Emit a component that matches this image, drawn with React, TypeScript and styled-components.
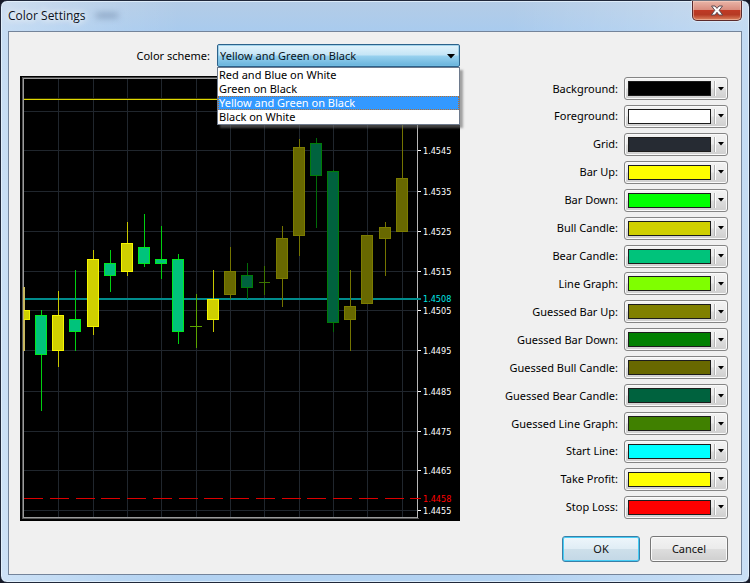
import React from "react";
import styled, { createGlobalStyle } from "styled-components";

const uiFont = '"Noto Sans", "Open Sans", sans-serif';
const axisFont = '"DejaVu Sans Condensed", "DejaVu Sans", sans-serif';

const GlobalStyle = createGlobalStyle`
  * { box-sizing: border-box; }
  body {
    margin: 0;
    background: #161a28;
    color: #000;
    font-family: ${uiFont};
    font-size: 11px;
    line-height: 14px;
  }
`;

const Window = styled.div`
  display: flex;
  flex-direction: column;
  min-height: 100vh;
  padding: 0 7px 7px;
  border: 1px solid #20283a;
  border-radius: 7px;
  background:
    linear-gradient(90deg, rgba(255, 255, 255, 0.35) 0%, rgba(255, 255, 255, 0.1) 14%, rgba(255, 255, 255, 0) 24%, rgba(255, 255, 255, 0) 68%, rgba(255, 255, 255, 0.3) 100%),
    linear-gradient(180deg, #b4cce6 0%, #a9cbee 30px, #b3d2f1 100%);
  box-shadow: inset 0 0 0 1px rgba(235, 246, 255, 0.7);
`;

const TitleBar = styled.header`
  display: flex;
  justify-content: space-between;
  align-items: flex-start;
  height: 30px;
`;

const Title = styled.h1`
  margin: 0;
  padding-top: 6px;
  font: 400 12px/18px "Open Sans", "Noto Sans", sans-serif;
  color: #0c121c;
  text-shadow: 0 0 8px #fff, 0 0 6px #fff;

  &::after {
    content: "";
    display: inline-block;
    width: 22px;
    height: 5px;
    margin-left: 10px;
    vertical-align: 2px;
    background: rgba(70, 96, 130, 0.4);
    filter: blur(3px);
  }
`;

const CloseButton = styled.button`
  display: flex;
  align-items: center;
  justify-content: center;
  width: 50px;
  height: 20px;
  padding: 0;
  border: 1px solid #5b2a2c;
  border-top: 0;
  border-radius: 0 0 5px 5px;
  background: linear-gradient(#e9b5a8 0%, #d98d7e 46%, #bf3a25 50%, #b53a24 72%, #dc8460 100%);
  box-shadow: inset 0 0 0 1px rgba(255, 220, 205, 0.45), 0 0 1px 1px rgba(255, 255, 255, 0.4);
`;

const Client = styled.main`
  flex: 1;
  display: grid;
  grid-template-columns: minmax(0, 1fr) 224px;
  grid-template-rows: auto auto 1fr;
  column-gap: 44px;
  padding: 12px 13px 12px 11px;
  border: 1px solid #74849a;
  background: #f0f0f0;
`;

const SchemeRow = styled.div`
  grid-column: 1;
  display: flex;
  align-items: center;
  justify-content: flex-end;
  gap: 7px;
  margin-bottom: 9px;
`;

const SelectBox = styled.div`
  position: relative;
  width: 243px;
`;

const SchemeSelect = styled.select`
  appearance: none;
  display: block;
  width: 100%;
  height: 23px;
  padding: 0 20px 0 2px;
  border: 1px solid #2c628b;
  border-radius: 2px;
  background: linear-gradient(#e3f3fb 0%, #c4e5f6 48%, #98d1ef 52%, #68b3db 100%);
  box-shadow: inset 0 0 0 1px rgba(120, 190, 225, 0.6);
  color: #0a1420;
  font: inherit;
`;

const SelectArrow = styled.svg`
  position: absolute;
  top: 10px;
  right: 5px;
  pointer-events: none;
`;

const OptionList = styled.ul`
  position: absolute;
  z-index: 1;
  top: 100%;
  left: 0;
  width: 100%;
  margin: 0;
  padding: 0;
  list-style: none;
  border: 1px solid #6e7a8c;
  background: #fff;
  box-shadow: 3px 3px 2px rgba(110, 110, 110, 0.6);
`;

const Option = styled.li<{ $selected: boolean }>`
  padding-left: 1px;
  color: ${(p) => (p.$selected ? "#fff" : "#000")};
  background: ${(p) => (p.$selected ? "#3399ff" : "transparent")};
  outline: ${(p) => (p.$selected ? "1px dotted #b8702c" : "none")};
  outline-offset: -1px;
`;

const ChartSvg = styled.svg`
  grid-column: 1;
  display: block;
  width: 100%;
  height: auto;
`;

const AxisText = styled.text`
  font-family: ${axisFont};
  font-size: 9px;
`;

const ColorList = styled.div`
  grid-column: 2;
  display: flex;
  flex-direction: column;
  justify-content: space-between;
  padding: 1px 0 2px;
`;

const ColorRow = styled.div`
  display: flex;
  align-items: center;
  justify-content: flex-end;
  gap: 6px;
`;

const ColorButton = styled.button`
  display: flex;
  align-items: center;
  width: 104px;
  height: 23px;
  padding: 0 3px;
  border: 1px solid #858585;
  border-radius: 3px;
  background: linear-gradient(#f3f3f3 0%, #ebebeb 48%, #dddddd 52%, #cfcfcf 100%);
  box-shadow: inset 0 0 0 1px #fafafa;
`;

const Swatch = styled.span<{ $color: string }>`
  flex: 1;
  height: 15px;
  border: 1px solid #1c1c1c;
  background: ${(p) => p.$color};
`;

const Divider = styled.span`
  width: 2px;
  height: 15px;
  margin: 0 2px 0 3px;
  border-left: 1px solid #b4b4b4;
  border-right: 1px solid #fff;
`;

const Actions = styled.footer`
  grid-column: 1 / -1;
  display: flex;
  justify-content: flex-end;
  align-items: flex-end;
  gap: 10px;
`;

const ActionButton = styled.button<{ $primary?: boolean }>`
  width: 78px;
  height: 26px;
  padding: 0;
  border: 1px solid ${(p) => (p.$primary ? "#3a7fa8" : "#777")};
  border-radius: 3px;
  background: ${(p) =>
    p.$primary
      ? "linear-gradient(#eef6fb 0%, #e0edf5 48%, #cddfea 52%, #c3d8e6 100%)"
      : "linear-gradient(#f3f3f3 0%, #ebebeb 48%, #dddddd 52%, #cfcfcf 100%)"};
  box-shadow: inset 0 0 0 1px ${(p) => (p.$primary ? "#46cdf5" : "#fafafa")};
  color: #101010;
  font: inherit;
`;

const schemes = ["Red and Blue on White", "Green on Black", "Yellow and Green on Black", "Black on White"];
const current = "Yellow and Green on Black";

const colors: [string, string][] = [
  ["Background", "#000000"],
  ["Foreground", "#ffffff"],
  ["Grid", "#262b33"],
  ["Bar Up", "#ffff00"],
  ["Bar Down", "#00ff00"],
  ["Bull Candle", "#cfcf00"],
  ["Bear Candle", "#00c37b"],
  ["Line Graph", "#7fff00"],
  ["Guessed Bar Up", "#808000"],
  ["Guessed Bar Down", "#008000"],
  ["Guessed Bull Candle", "#686800"],
  ["Guessed Bear Candle", "#00623e"],
  ["Guessed Line Graph", "#408000"],
  ["Start Line", "#00ffff"],
  ["Take Profit", "#ffff00"],
  ["Stop Loss", "#ff0000"],
];

type Kind = "bull" | "bear" | "guessBull" | "guessBear";

const candleColors: Record<Kind, { body: string; edge: string; wick: string }> = {
  bull: { body: "#cfcf00", edge: "#f6f600", wick: "#c8c800" },
  bear: { body: "#00c37b", edge: "#00e820", wick: "#00d010" },
  guessBull: { body: "#686800", edge: "#7c7c00", wick: "#747400" },
  guessBear: { body: "#00623e", edge: "#007c08", wick: "#006c08" },
};

// kind, centre x, body top, body bottom, wick top, wick bottom
const candles: [Kind, number, number, number, number, number][] = [
  ["bear", 21, 239, 279, 234, 335],
  ["bull", 38, 239, 275, 215, 291],
  ["bear", 55, 243, 256, 194, 275],
  ["bull", 73, 183, 251, 174, 259],
  ["bear", 90, 187, 200, 174, 216],
  ["bull", 107, 167, 196, 146, 200],
  ["bear", 124, 171, 188, 138, 191],
  ["bear", 141, 183, 188, 150, 203],
  ["bear", 158, 183, 256, 178, 268],
  ["bull", 193, 223, 244, 194, 256],
  ["guessBull", 210, 195, 219, 171, 223],
  ["guessBear", 227, 199, 212, 187, 223],
  ["guessBull", 262, 162, 203, 150, 231],
  ["guessBull", 279, 71, 160, 63, 180],
  ["guessBear", 296, 67, 100, 62, 152],
  ["guessBear", 313, 95, 247, 94, 256],
  ["guessBull", 330, 230, 244, 194, 275],
  ["guessBull", 347, 159, 228, 159, 228],
  ["guessBull", 365, 151, 163, 146, 200],
  ["guessBull", 382, 102, 156, 32, 156],
];

const gridX = [38, 73, 107, 141, 176, 210, 244, 279, 313, 347, 382];
const levels: [string, number][] = [
  ["1.4545", 74],
  ["1.4535", 115],
  ["1.4525", 155],
  ["1.4515", 195],
  ["1.4505", 234],
  ["1.4495", 274],
  ["1.4485", 315],
  ["1.4475", 355],
  ["1.4465", 394],
  ["1.4455", 434],
];

function Chart() {
  return (
    <ChartSvg viewBox="0 0 440 445" role="img" aria-label="Chart preview" shapeRendering="crispEdges">
      <rect width="440" height="445" fill="#000" />
      <g fill="#20262d">
        {gridX.map((x) => (
          <rect key={x} x={x} y="3" width="1" height="439" />
        ))}
        <rect x="3" y="35" width="394" height="1" />
        {levels.map(([label, y]) => (
          <rect key={label} x="3" y={y} width="394" height="1" />
        ))}
      </g>
      <rect x="3" y="2" width="395" height="1" fill="#9c9c9c" />
      <rect x="3" y="2" width="1" height="440" fill="#9c9c9c" />
      <rect x="3" y="441" width="395" height="1" fill="#9c9c9c" />
      <rect x="397" y="2" width="1" height="440" fill="#b8b8b8" />
      <rect x="2" y="1" width="397" height="1" fill="#444" />
      <rect x="2" y="1" width="1" height="442" fill="#555" />
      <rect x="2" y="442" width="397" height="1" fill="#555" />
      <rect x="4" y="22" width="393" height="1" fill="#333000" />
      <rect x="4" y="23" width="393" height="1" fill="#e0d800" />
      <rect x="4" y="222" width="397" height="2" fill="#008c8c" />

      <rect x="3" y="211" width="2" height="64" fill="#c8b860" />
      <rect x="4" y="234" width="6" height="10" fill="#f0f000" />
      <rect x="4" y="235" width="5" height="8" fill="#cfcf00" />
      {candles.map(([kind, x, top, bottom, high, low]) => {
        const c = candleColors[kind];
        return (
          <g key={x}>
            <rect x={x} y={high} width="1" height={low - high} fill={c.wick} />
            <rect x={x - 6} y={top} width="12" height={bottom - top} fill={c.edge} />
            <rect x={x - 5} y={top + 1} width="10" height={bottom - top - 2} fill={c.body} />
          </g>
        );
      })}
      <g fill="#5ba400">
        <rect x="176" y="218" width="1" height="54" />
        <rect x="170" y="250" width="12" height="1" />
      </g>
      <g fill="#3c7400">
        <rect x="244" y="190" width="1" height="29" />
        <rect x="239" y="206" width="11" height="1" />
      </g>

      <g fill="#dc0000">
        {Array.from({ length: 16 }, (_, i) => {
          const x = 4 + Math.round((i * 103) / 4);
          return <rect key={i} x={x} y="422" width={Math.min(19, 401 - x)} height="1" />;
        })}
      </g>
      {levels.map(([label, y]) => (
        <g key={label} fill="#fff">
          <rect x="398" y={y} width="3" height="1" />
          <AxisText x="403" y={y + 4}>{label}</AxisText>
        </g>
      ))}
      <AxisText x="403" y="226" fill="#00e6e6">1.4508</AxisText>
      <AxisText x="403" y="426" fill="#ff0000">1.4458</AxisText>
    </ChartSvg>
  );
}

export default function App() {
  return (
    <>
      <GlobalStyle />
      <Window>
        <TitleBar>
          <Title>Color Settings</Title>
          <CloseButton aria-label="Close">
            <svg width="14" height="11" viewBox="0 0 14 11">
              <path
                d="M1.5 1H5L7 3.4 9 1h3.500L9.200 5.300 12.700 10H9L7 7.300 5 10H1.300L4.800 5.300Z"
                fill="#fff"
                stroke="#5c4a50"
                strokeWidth="1"
                strokeLinejoin="round"
              />
            </svg>
          </CloseButton>
        </TitleBar>
        <Client>
          <SchemeRow>
            <label htmlFor="scheme">Color scheme:</label>
            <SelectBox>
              <SchemeSelect id="scheme" defaultValue={current}>
                {schemes.map((s) => (
                  <option key={s}>{s}</option>
                ))}
              </SchemeSelect>
              <SelectArrow width="8" height="5" viewBox="0 0 8 5">
                <path d="M0 0h8L4 4.500Z" fill="#000" />
              </SelectArrow>
              <OptionList role="listbox" aria-label="Color scheme">
                {schemes.map((s) => (
                  <Option key={s} role="option" aria-selected={s === current} $selected={s === current}>
                    {s}
                  </Option>
                ))}
              </OptionList>
            </SelectBox>
          </SchemeRow>
          <Chart />
          <ColorList>
            {colors.map(([name, color]) => {
              const id = name.toLowerCase().replace(/ /g, "-");
              return (
                <ColorRow key={name}>
                  <label htmlFor={id}>{name}:</label>
                  <ColorButton id={id}>
                    <Swatch $color={color} />
                    <Divider />
                    <svg width="6" height="4" viewBox="0 0 6 4">
                      <path d="M0 0h6L3 3.500Z" fill="#000" />
                    </svg>
                  </ColorButton>
                </ColorRow>
              );
            })}
          </ColorList>
          <Actions>
            <ActionButton $primary>OK</ActionButton>
            <ActionButton>Cancel</ActionButton>
          </Actions>
        </Client>
      </Window>
    </>
  );
}
